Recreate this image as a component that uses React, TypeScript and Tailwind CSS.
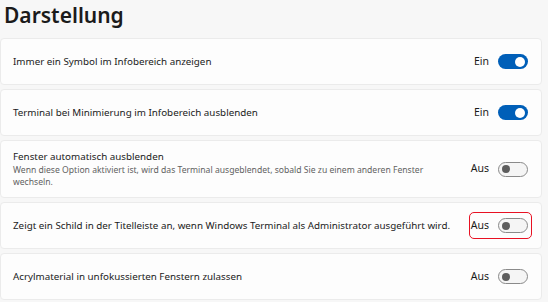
type Row = {
  label: string;
  description?: string;
  on: boolean;
  highlight?: boolean;
};

const rows: Row[] = [
  { label: "Immer ein Symbol im Infobereich anzeigen", on: true },
  { label: "Terminal bei Minimierung im Infobereich ausblenden", on: true },
  {
    label: "Fenster automatisch ausblenden",
    description:
      "Wenn diese Option aktiviert ist, wird das Terminal ausgeblendet, sobald Sie zu einem anderen Fenster wechseln.",
    on: false,
  },
  {
    label: "Zeigt ein Schild in der Titelleiste an, wenn Windows Terminal als Administrator ausgeführt wird.",
    on: false,
    highlight: true,
  },
  { label: "Acrylmaterial in unfokussierten Fenstern zulassen", on: false },
];

function Toggle({ on }: { on: boolean }) {
  if (on) {
    return (
      <span className="flex h-[15px] w-[30px] items-center justify-end rounded-full bg-[#005fb8] pr-[3px]">
        <span className="h-[10px] w-[10px] rounded-full bg-white" />
      </span>
    );
  }
  return (
    <span className="flex h-[15px] w-[30px] items-center rounded-full border border-[#8a8a8a] bg-[#f5f5f5] pl-[3px]">
      <span className="h-[8px] w-[8px] rounded-full bg-[#5d5d5d]" />
    </span>
  );
}

export default function App() {
  return (
    <div
      className="h-[302px] w-[548px] overflow-hidden bg-[#f7f7f7] text-[#1b1b1b]"
      style={{ fontFamily: '"Noto Sans", "Open Sans", sans-serif' }}
    >
      <h1 className="h-[38px] pl-[4px] pt-[1px] text-[21px] font-semibold leading-[28px]">Darstellung</h1>

      <div className="flex w-[542px] flex-col gap-[4px]">
        {rows.map((row) => (
          <div
            key={row.label}
            className={`flex items-center justify-between rounded-[4px] border border-[#ebebeb] bg-[#fdfdfd] pl-[12px] pr-[13px] ${
              row.description ? "h-[58px]" : "h-[47px]"
            }`}
          >
            <div className="flex flex-col">
              <span className="whitespace-nowrap text-[9.8px] leading-[14px]">{row.label}</span>
              {row.description && (
                <span className="w-[422px] text-[8.6px] leading-[12px] text-[#616161]">{row.description}</span>
              )}
            </div>
            <div
              className={`flex items-center gap-[9px] rounded-[5px] ${
                row.highlight ? "-mr-[4px] border border-[#e81123] py-[5px] pl-[1px] pr-[3px]" : ""
              }`}
            >
              <span className="text-[10.5px]">{row.on ? "Ein" : "Aus"}</span>
              <Toggle on={row.on} />
            </div>
          </div>
        ))}
      </div>
    </div>
  );
}
